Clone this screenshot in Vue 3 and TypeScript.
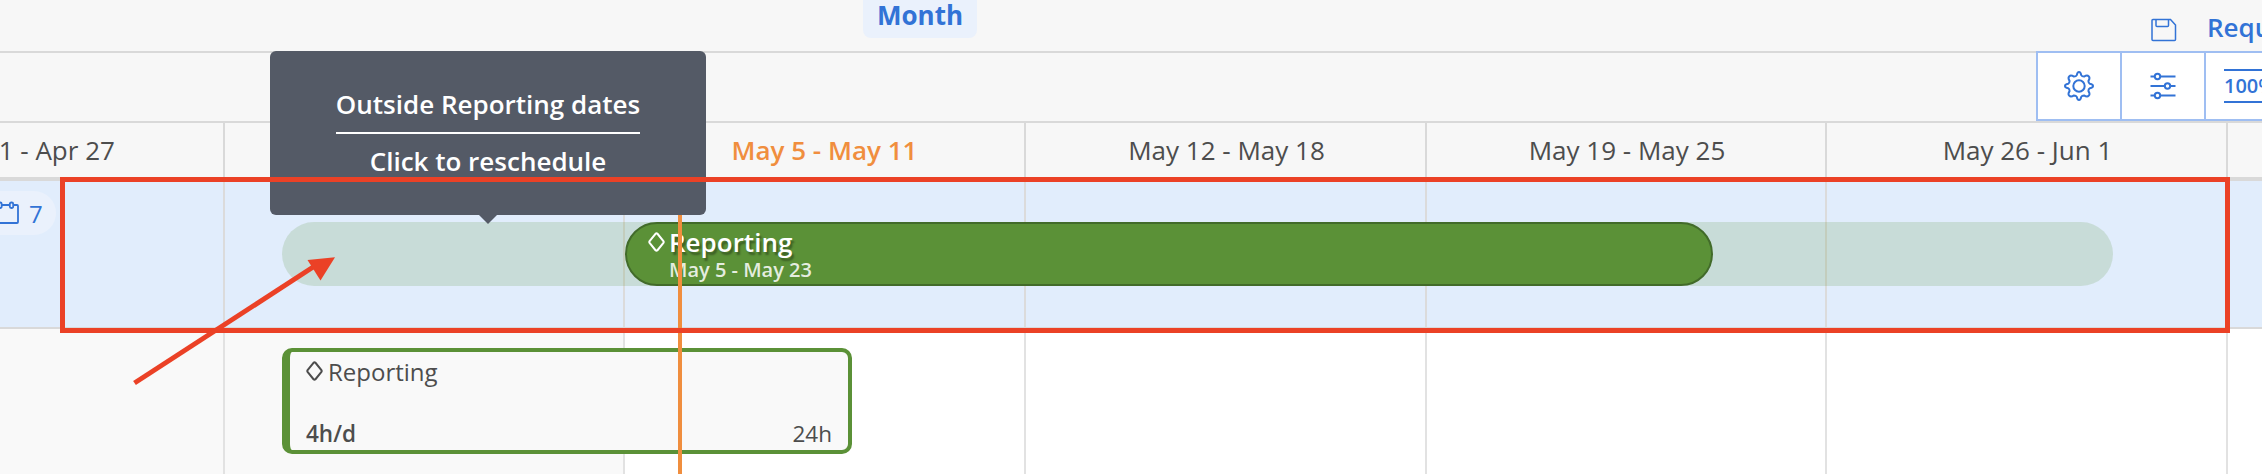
<script setup lang="ts">
interface Week { label: string; width: number; current?: boolean; past?: boolean }

const weeks: Week[] = [
  { label: 'Apr 21 - Apr 27', width: 401, past: true },
  { label: 'Apr 28 - May 4', width: 400, past: true },
  { label: 'May 5 - May 11', width: 401, current: true },
  { label: 'May 12 - May 18', width: 401 },
  { label: 'May 19 - May 25', width: 400 },
  { label: 'May 26 - Jun 1', width: 401 },
  { label: '', width: 400 },
]
const columns = weeks.map((w) => `${w.width}px`).join(' ')
</script>

<template>
  <div class="planner">
    <div class="topbar">
      <span class="range">Month</span>
      <div class="actions">
        <svg class="save" width="26" height="24" viewBox="0 0 26 24"><path d="M2 1.500h17.500l5 5.500v14.500a1 1 0 0 1-1 1H2a1 1 0 0 1-1-1v-19a1 1 0 0 1 1-1zM5 1.500v6a1 1 0 0 0 1 1h10.500a1 1 0 0 0 1-1v-6" /></svg>
        <span>Requests</span>
      </div>
    </div>

    <div class="toolbar">
      <div class="tools">
        <button class="tool">
          <svg width="30" height="30" viewBox="0 0 30 30"><circle cx="15" cy="15" r="5.700" /><path d="M12.800 4.100 C13.300 1.300 14 1 15 1 S16.700 1.300 17.200 4.100 Q18 5.600 20 5.600 C22.400 4.100 23.600 4 24.700 5.300 C26 6.400 25.900 7.600 24.400 10 Q24.400 12 25.900 12.800 C28.700 13.300 29 14 29 15 S28.700 16.700 25.900 17.200 Q24.400 18 24.400 20 C25.900 22.400 26 23.600 24.700 24.700 C23.600 26 22.400 25.900 20 24.400 Q18 24.400 17.200 25.900 C16.700 28.700 16 29 15 29 S13.300 28.700 12.800 25.900 Q12 24.400 10 24.400 C7.600 25.900 6.400 26 5.300 24.700 C4 23.600 4.100 22.400 5.600 20 Q5.600 18 4.100 17.200 C1.300 16.700 1 16 1 15 S1.300 13.300 4.100 12.800 Q5.600 12 5.600 10 C4.100 7.600 4 6.400 5.300 5.300 C6.400 4 7.600 4.100 10 5.600 Q12 5.600 12.800 4.100Z" /></svg>
        </button>
        <button class="tool">
          <svg width="26" height="28" viewBox="0 0 26 28"><path d="M0.500 4.500h4.300M10.200 4.500H25.500M0.500 14h14.300M20.200 14h5.300M0.500 23.500h4.300M10.200 23.500H25.500" /><circle cx="7.500" cy="4.500" r="2.700" /><circle cx="17.500" cy="14" r="2.700" /><circle cx="7.500" cy="23.500" r="2.700" /></svg>
        </button>
        <button class="tool zoom"><span>100%</span></button>
      </div>
    </div>

    <div class="weeks" :style="{ gridTemplateColumns: columns }">
      <div v-for="(w, i) in weeks" :key="i" class="week" :class="{ current: w.current }">{{ w.label }}</div>
    </div>

    <div class="row phase-row">
      <div class="cells" :style="{ gridTemplateColumns: columns }">
        <div v-for="(w, i) in weeks" :key="i" class="cell" />
      </div>
      <div class="count">
        <svg width="26" height="24" viewBox="0 0 26 24"><path d="M5 4H2a1 1 0 0 0-1 1v16a1 1 0 0 0 1 1h22a1 1 0 0 0 1-1V5a1 1 0 0 0-1-1h-3M9 4h7.500" /><rect x="5.300" y="1.500" width="3.400" height="5.500" rx="1.500" /><rect x="16.800" y="1.500" width="3.400" height="5.500" rx="1.500" /></svg>
        <span>7</span>
      </div>
      <div class="extent" />
      <div class="phase">
        <svg class="diamond" width="17" height="20" viewBox="0 0 17 20"><path d="M7.500 1.800 1.600 9.100q-.6.900 0 1.800l5.900 7.300q1 .9 2 0l5.900-7.300q.6-.9 0-1.800L9.500 1.800q-1-.9-2 0z" /></svg>
        <div class="phase-text">
          <div class="phase-name">Reporting</div>
          <div class="phase-dates">May 5 - May 23</div>
        </div>
      </div>
    </div>

    <div class="row task-row">
      <div class="cells" :style="{ gridTemplateColumns: columns }">
        <div v-for="(w, i) in weeks" :key="i" class="cell" :class="{ past: w.past }" />
      </div>
      <div class="task">
        <div class="task-name">
          <svg class="diamond" width="17" height="20" viewBox="0 0 17 20"><path d="M7.500 1.800 1.600 9.100q-.6.900 0 1.800l5.900 7.300q1 .9 2 0l5.900-7.300q.6-.9 0-1.800L9.500 1.800q-1-.9-2 0z" /></svg>
          <span>Reporting</span>
        </div>
        <div class="task-hours"><b>4h/d</b><span>24h</span></div>
      </div>
    </div>

    <div class="today" />
    <div class="tooltip">
      <div class="tooltip-title">Outside Reporting dates</div>
      <div>Click to reschedule</div>
    </div>
    <div class="highlight" />
    <svg class="arrow" width="220" height="140" viewBox="0 0 220 140"><path d="M4.500 133 187 14.500" stroke="#eb4126" stroke-width="5" /><path d="M205 7.300 177.500 10 190.500 30.600Z" fill="#eb4126" /></svg>
  </div>
</template>

<style>
body { margin: 0; }
</style>

<style scoped>
.planner {
  position: relative;
  width: 2262px;
  height: 474px;
  overflow: hidden;
  background: #f7f7f7;
  color: #4d4d4d;
  font-family: "Open Sans", "Noto Sans", sans-serif;
  font-size: 26px;
}
.planner * { box-sizing: border-box; }
svg { display: block; flex: none; fill: none; }
.topbar {
  display: flex;
  justify-content: space-between;
  height: 53px;
  padding-left: 863px;
  border-bottom: 2px solid #d9d9d9;
}
.range {
  width: 114px;
  height: 38px;
  border-radius: 0 0 8px 8px;
  background: #eaf1fc;
  color: #3273d6;
  font-weight: 700;
  line-height: 31px;
  text-align: center;
}
.actions {
  display: flex;
  width: 111px;
  gap: 30px;
  color: #3273d6;
  font-weight: 600;
  line-height: 55px;
}
.save { margin-top: 18px; stroke: #3273d6; stroke-width: 1.500; }
.toolbar { display: flex; justify-content: flex-end; height: 68px; }
.tools {
  display: flex;
  width: 226px;
  height: 70px;
  margin-top: -2px;
  border: 2px solid #9fbef2;
  border-right: 0;
  background: #fff;
  position: relative;
  z-index: 1;
}
.tool {
  display: flex;
  flex: none;
  align-items: center;
  justify-content: center;
  width: 84px;
  padding: 0;
  border: 0;
  border-right: 2px solid #9fbef2;
  background: none;
  stroke: #3273d6;
  stroke-width: 2;
}
.zoom { padding-left: 12px; border-right: 0; stroke: none; }
.zoom span {
  width: 60px;
  height: 34px;
  border: solid #3273d6;
  border-width: 2px 0;
  color: #3273d6;
  font: 600 20px/30px "Open Sans", sans-serif;
  text-align: left;
}
.weeks {
  display: grid;
  height: 60px;
  margin-left: -176px;
  border-top: 2px solid #d9d9d9;
  border-bottom: 4px solid #d9d9d9;
}
.week {
  padding-left: 2px;
  border-right: 2px solid #d9d9d9;
  line-height: 54px;
  text-align: center;
  white-space: nowrap;
}
.current { padding: 0; color: #f08e3e; font-weight: 600; }
.row { position: relative; }
.cells { display: grid; height: 100%; margin-left: -176px; }
.cell { border-right: 2px solid #dbdbdb; }
.phase-row { height: 148px; border-bottom: 2px solid #d9d9d9; background: #e1edfc; }
.task-row { height: 145px; background: #fff; }
.task-row .cell { border-color: #e2e2e2; }
.past { background: #f9f9f9; }
.count {
  position: absolute;
  top: 10px;
  left: -30px;
  display: flex;
  align-items: center;
  gap: 10px;
  width: 86px;
  height: 44px;
  padding-left: 23px;
  border-radius: 22px;
  background: #eaf1fc;
  color: #3273d6;
  font-size: 24px;
  stroke: #3273d6;
  stroke-width: 1.800;
}
.count span { stroke: none; }
.extent {
  position: absolute;
  top: 41px;
  left: 282px;
  width: 1831px;
  height: 64px;
  border-radius: 32px;
  background: rgba(91, 145, 55, .18);
}
.phase {
  position: absolute;
  top: 41px;
  left: 625px;
  display: flex;
  gap: 4px;
  width: 1088px;
  height: 64px;
  padding-left: 21px;
  border: 2px solid #426b2a;
  border-radius: 32px;
  background: #5b9137;
  color: #fff;
}
.phase .diamond { margin-top: 8px; stroke: #fff; stroke-width: 2; }
.phase-name { height: 35px; font-weight: 600; line-height: 36px; text-shadow: 2px 3px 2px rgba(0, 0, 0, .35); }
.phase-dates { color: rgba(255, 255, 255, .85); font-size: 20px; font-weight: 600; line-height: 22px; }
.task {
  position: absolute;
  top: 19px;
  left: 282px;
  display: flex;
  flex-direction: column;
  justify-content: space-between;
  width: 570px;
  height: 106px;
  padding: 4px 16px 0 16px;
  border: 4px solid #5b9137;
  border-left-width: 8px;
  border-radius: 10px;
  background: #f9f9f9;
  font-size: 24px;
}
.task-name { display: flex; gap: 5px; line-height: 31px; }
.task-name .diamond { margin-top: 5px; stroke: #4d4d4d; stroke-width: 2; }
.task-hours { display: flex; justify-content: space-between; font-size: 22.500px; line-height: 33px; }
.task-hours b { font-weight: 600; }
.today { position: absolute; top: 181px; bottom: 0; left: 678px; width: 4px; background: #f08e3e; }
.tooltip {
  position: absolute;
  top: 51px;
  left: 270px;
  display: flex;
  flex-direction: column;
  align-items: center;
  width: 436px;
  height: 164px;
  padding-top: 34px;
  border-radius: 6px;
  background: #545a66;
  color: #fff;
  font-weight: 600;
  line-height: 54px;
}
.tooltip-title { height: 49px; border-bottom: 2px solid #fff; line-height: 38px; }
.tooltip::after {
  position: absolute;
  top: 164px;
  left: 209px;
  border: 9px solid transparent;
  border-top-color: #545a66;
  border-bottom: 0;
  content: "";
}
.highlight {
  position: absolute;
  top: 177px;
  left: 60px;
  width: 2170px;
  height: 156px;
  border: 5px solid #eb4126;
}
.arrow { position: absolute; top: 250px; left: 130px; }
</style>
